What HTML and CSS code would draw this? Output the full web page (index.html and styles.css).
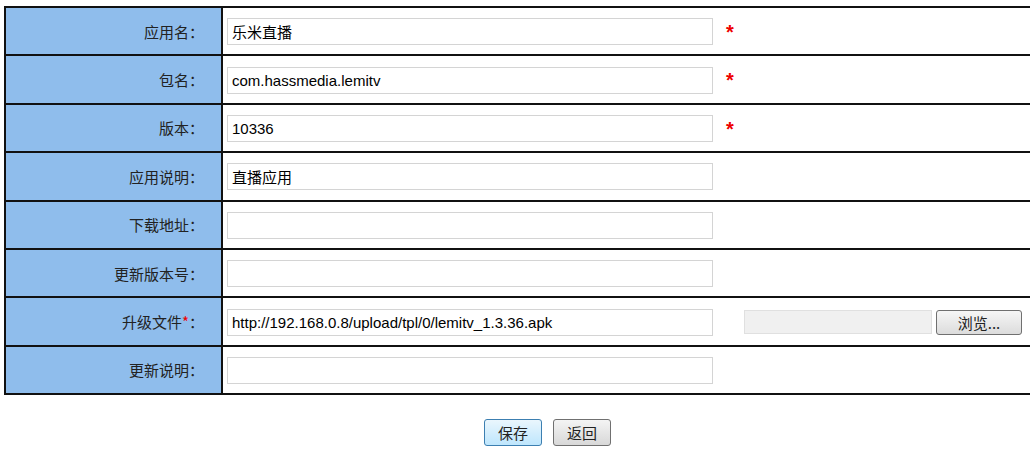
FILE: index.html
```html
<!DOCTYPE html>
<html lang="zh-CN">
<head>
    <meta charset="UTF-8">
    <title>应用信息</title>
    <link rel="stylesheet" href="styles.css">
</head>
<body>
    <form class="app-form">
        <table class="form-table">
            <tr>
                <td class="label">应用名：</td>
                <td class="field"><input type="text" class="text-input" value="乐米直播"><span class="required">*</span></td>
            </tr>
            <tr>
                <td class="label">包名：</td>
                <td class="field"><input type="text" class="text-input" value="com.hassmedia.lemitv"><span class="required">*</span></td>
            </tr>
            <tr>
                <td class="label">版本：</td>
                <td class="field"><input type="text" class="text-input" value="10336"><span class="required">*</span></td>
            </tr>
            <tr>
                <td class="label">应用说明：</td>
                <td class="field"><input type="text" class="text-input" value="直播应用"></td>
            </tr>
            <tr>
                <td class="label">下载地址：</td>
                <td class="field"><input type="text" class="text-input" value=""></td>
            </tr>
            <tr>
                <td class="label">更新版本号：</td>
                <td class="field"><input type="text" class="text-input" value=""></td>
            </tr>
            <tr>
                <td class="label">升级文件<span class="mark">*</span>：</td>
                <td class="field"><input type="text" class="text-input" value="http://192.168.0.8/upload/tpl/0/lemitv_1.3.36.apk"><span class="file-box"></span><button type="button" class="browse">浏览...</button></td>
            </tr>
            <tr>
                <td class="label">更新说明：</td>
                <td class="field"><input type="text" class="text-input" value=""></td>
            </tr>
        </table>

        <div class="actions">
            <button type="button" class="btn btn-save">保存</button>
            <button type="button" class="btn">返回</button>
        </div>
    </form>
</body>
</html>
```

FILE: styles.css
```css
body {
    margin: 0;
    padding: 0;
    background-color: #fff;
    font-family: "Noto Sans CJK SC", "Liberation Sans", sans-serif;
    overflow: hidden;
}

.app-form {
    padding: 6px 0 0 4px;
}

.form-table {
    width: 1040px;
    border-collapse: collapse;
}

.form-table td {
    border: 2px solid #111;
    height: 46.4px;
    padding: 0;
}

.label {
    width: 198px;
    padding-right: 17px !important;
    background-color: #8fbdec;
    text-align: right;
    font-size: 15px;
    color: #222;
}

.mark {
    color: #e00;
}

.field {
    padding-left: 4px !important;
    white-space: nowrap;
}

.text-input {
    width: 486px;
    height: 27px;
    box-sizing: border-box;
    padding: 0 4px;
    border: 1px solid #d4d4d4;
    font-family: "Liberation Sans", "Noto Sans CJK SC", sans-serif;
    font-size: 15px;
    color: #000;
    vertical-align: middle;
}

.required {
    display: inline-block;
    margin-left: 13px;
    color: #e00;
    font-family: "Liberation Sans", sans-serif;
    font-size: 20px;
    font-weight: bold;
    vertical-align: middle;
    line-height: 20px;
}

.file-box {
    display: inline-block;
    width: 188px;
    height: 24px;
    box-sizing: border-box;
    margin-left: 31px;
    background-color: #f0f0f0;
    border: 1px solid #e0e0e0;
    vertical-align: middle;
}

.browse {
    width: 86px;
    height: 25px;
    margin-left: 4px;
    border: 1px solid #707070;
    border-radius: 3px;
    background: linear-gradient(#f6f6f6, #dcdcdc);
    font-family: "Noto Sans CJK SC", sans-serif;
    font-size: 15px;
    color: #222;
    padding: 0;
    vertical-align: middle;
}

.actions {
    display: flex;
    gap: 11px;
    padding: 24px 0 0 480px;
}

.btn {
    width: 58px;
    height: 27px;
    padding: 0;
    border: 1px solid #707070;
    border-radius: 3px;
    background: linear-gradient(#f4f4f4, #d8d8d8);
    font-family: "Noto Sans CJK SC", sans-serif;
    font-size: 15px;
    color: #222;
}

.btn-save {
    border-color: #3c7fb1;
    background: linear-gradient(#eaf6fd, #bee6fd);
}
```
